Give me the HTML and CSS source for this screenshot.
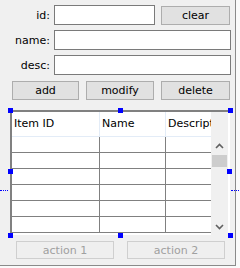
FILE: index.html
```html
<!DOCTYPE html>
<html lang="en">
<head>
    <meta charset="UTF-8">
    <title>Items</title>
    <link rel="stylesheet" href="styles.css">
</head>
<body>
    <div class="window">
        <div class="fields">
            <div class="row">
                <label class="lbl" for="id">id:</label>
                <input class="txt short" id="id" type="text">
                <button class="btn clear">clear</button>
            </div>
            <div class="row">
                <label class="lbl" for="name">name:</label>
                <input class="txt long" id="name" type="text">
            </div>
            <div class="row">
                <label class="lbl" for="desc">desc:</label>
                <input class="txt long" id="desc" type="text">
            </div>
        </div>

        <div class="actions">
            <button class="btn add">add</button>
            <button class="btn modify">modify</button>
            <button class="btn delete">delete</button>
        </div>

        <div class="grid-wrap">
            <div class="grid">
                <div class="grid-body">
                    <div class="hcell">Item ID</div>
                    <div class="hcell">Name</div>
                    <div class="hcell last">Description</div>

                    <div class="cell"></div><div class="cell"></div><div class="cell"></div>
                    <div class="cell"></div><div class="cell"></div><div class="cell"></div>
                    <div class="cell"></div><div class="cell"></div><div class="cell"></div>
                    <div class="cell"></div><div class="cell"></div><div class="cell"></div>
                    <div class="cell"></div><div class="cell"></div><div class="cell"></div>
                    <div class="cell"></div><div class="cell"></div><div class="cell"></div>
                </div>
                <div class="vscroll">
                    <div class="arrow up">
                        <svg width="9" height="6" viewBox="0 0 9 6"><path d="M1 5 L4.5 1.5 L8 5" fill="none" stroke="#606060" stroke-width="1.6"/></svg>
                    </div>
                    <div class="thumb"></div>
                    <div class="track"></div>
                    <div class="arrow down">
                        <svg width="9" height="6" viewBox="0 0 9 6"><path d="M1 1 L4.5 4.5 L8 1" fill="none" stroke="#606060" stroke-width="1.6"/></svg>
                    </div>
                </div>
            </div>
            <!-- designer selection handles -->
            <span class="handle tl"></span>
            <span class="handle tm"></span>
            <span class="handle tr"></span>
            <span class="handle ml"></span>
            <span class="handle mr"></span>
            <span class="handle bl"></span>
            <span class="handle bm"></span>
            <span class="handle br"></span>
            <span class="anchor left"></span>
            <span class="anchor right"></span>
        </div>

        <div class="footer">
            <button class="btn action" disabled>action 1</button>
            <button class="btn action" disabled>action 2</button>
        </div>
    </div>
</body>
</html>
```

FILE: styles.css
```css
body {
    margin: 0;
    padding: 0;
    background-color: #fafafa;
    font-family: "DejaVu Sans", Tahoma, sans-serif;
    font-size: 11px;
    color: #000;
}
.window {
    position: relative;
    width: 236px;
    height: 266px;
    box-sizing: border-box;
    padding-top: 5px;
    background-color: #f0f0f0;
    border-right: 1px solid #8a8a8a;
    border-bottom: 1px solid #8a8a8a;
}
.fields {
    display: flex;
    flex-direction: column;
    gap: 5px;
}
.row {
    display: flex;
    align-items: center;
    height: 20px;
}
.lbl {
    width: 50px;
    margin-right: 4px;
    text-align: right;
}
.txt {
    height: 20px;
    box-sizing: border-box;
    border: 1px solid #7a7a7a;
    background: #fff;
    margin: 0;
    padding: 0 2px;
}
.short {
    width: 101px;
}
.long {
    width: 177px;
}
.btn {
    font-family: inherit;
    font-size: 11px;
    color: #000;
    background-color: #e1e1e1;
    border: 1px solid #adadad;
    margin: 0;
    padding: 0;
    box-sizing: border-box;
}
.clear {
    width: 69px;
    height: 19px;
    margin-left: 6px;
}
.actions {
    display: flex;
    margin-top: 6px;
    padding-left: 12px;
}
.actions .btn {
    height: 19px;
}
.add {
    width: 67px;
}
.modify {
    width: 68px;
    margin-left: 7px;
}
.delete {
    width: 69px;
    margin-left: 7px;
}

/* data grid */
.grid-wrap {
    position: relative;
    margin: 10px 0 0 10px;
    width: 220px;
    height: 125px;
}
.grid {
    display: flex;
    height: 100%;
    box-sizing: border-box;
    border-top: 2px solid #808080;
    border-left: 2px solid #808080;
    border-right: 2px solid #fff;
    overflow: hidden;
}
.grid-body {
    display: grid;
    grid-template-columns: 88px 66px 45px;
    grid-template-rows: 25px repeat(6, 16px);
    width: 199px;
    background: #fff;
    overflow: hidden;
}
.hcell {
    box-sizing: border-box;
    padding: 5px 0 0 2px;
    background: #fff;
    border-right: 1px solid #e3ecf7;
    border-bottom: 1px solid #e3ecf7;
    white-space: nowrap;
    overflow: hidden;
}
.hcell.last {
    border-right: none;
}
.cell {
    box-sizing: border-box;
    border-right: 1px solid #808080;
    border-bottom: 1px solid #808080;
}
.cell:nth-child(3n) {
    border-right: none;
}
.vscroll {
    display: flex;
    flex-direction: column;
    width: 17px;
    background: #f0f0f0;
}
.arrow {
    display: flex;
    align-items: center;
    justify-content: center;
    height: 17px;
}
.arrow.up {
    margin-top: 25px;
}
.thumb {
    height: 12px;
    margin: 1px 1px 0 1px;
    background: #cdcdcd;
}
.track {
    flex: 1;
}

.handle {
    position: absolute;
    width: 5px;
    height: 5px;
    background: #0000ff;
}
.tl { left: -2px; top: -2px; }
.tm { left: 108px; top: -2px; }
.tr { left: 218px; top: -2px; }
.ml { left: -2px; top: 59px; }
.mr { left: 217px; top: 59px; }
.bl { left: -2px; top: 123px; }
.bm { left: 108px; top: 123px; }
.br { left: 218px; top: 123px; }
.anchor {
    position: absolute;
    top: 80px;
    height: 0;
    width: 8px;
    border-top: 1px dotted #0000ff;
}
.anchor.left { left: -10px; }
.anchor.right { left: 221px; }

.footer {
    display: flex;
    gap: 13px;
    margin-top: 6px;
    padding-left: 16px;
}
.action {
    width: 98px;
    height: 18px;
    color: #a0a0a0;
    background-color: #efefef;
    border-color: #cfcfcf;
}
```
